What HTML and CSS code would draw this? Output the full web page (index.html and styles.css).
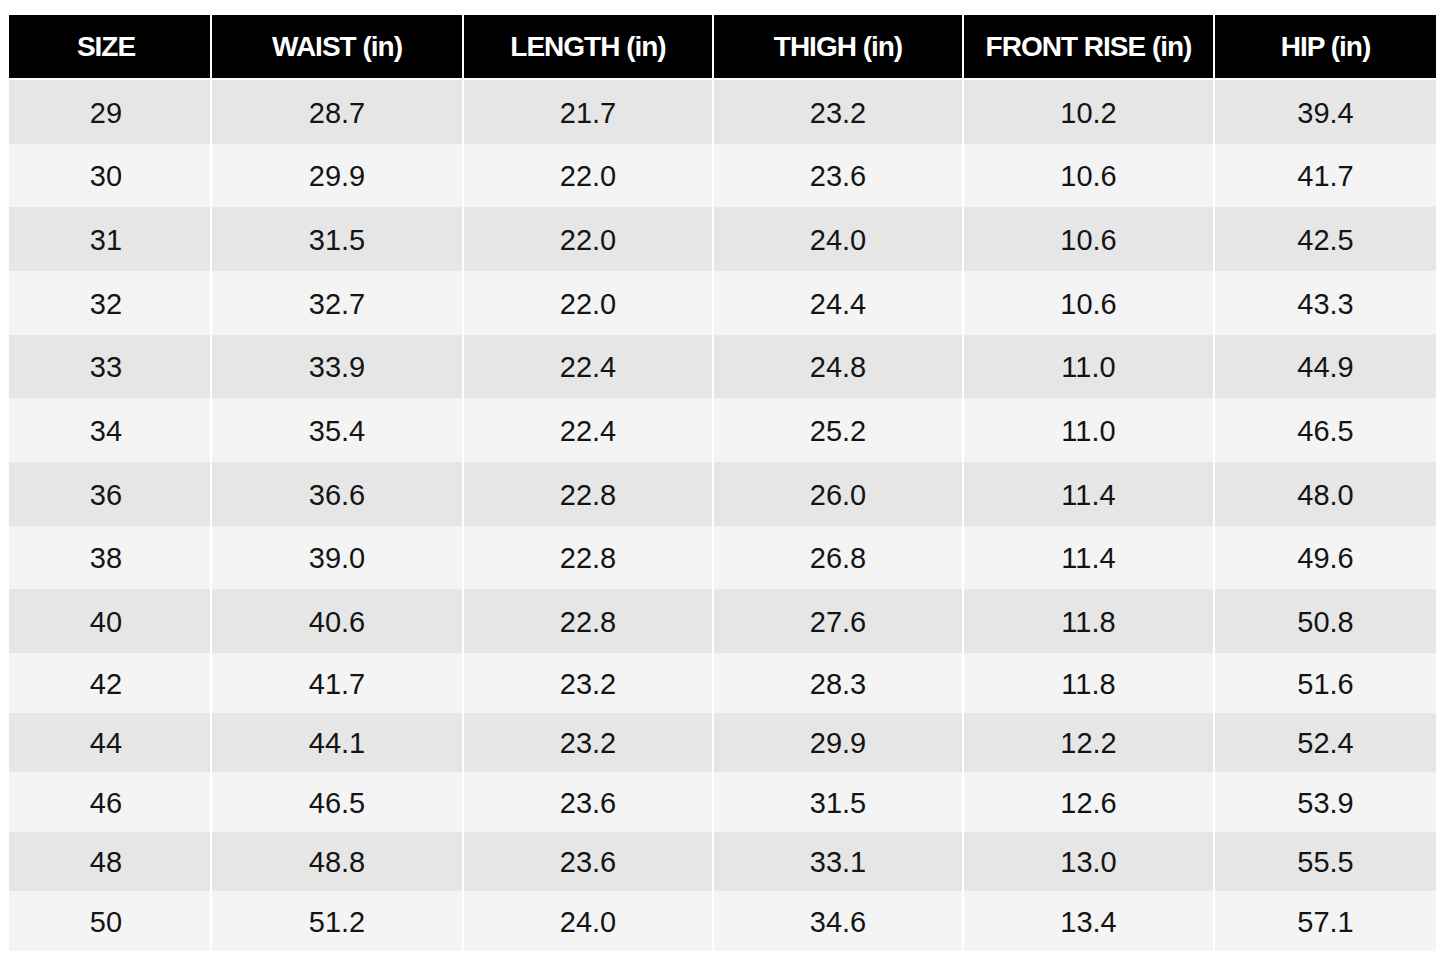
FILE: index.html
```html
<!DOCTYPE html>
<html lang="en">
<head>
<meta charset="utf-8">
<title>Size Chart</title>
<link rel="stylesheet" href="styles.css">
</head>
<body>
<div class="chart">
  <div class="row head">
    <div class="cell first">SIZE</div><div class="cell">WAIST (in)</div><div class="cell">LENGTH (in)</div><div class="cell">THIGH (in)</div><div class="cell">FRONT RISE (in)</div><div class="cell">HIP (in)</div>
  </div>
  <div class="row dark"><div class="cell first">29</div><div class="cell">28.7</div><div class="cell">21.7</div><div class="cell">23.2</div><div class="cell">10.2</div><div class="cell">39.4</div></div>
  <div class="row light"><div class="cell first">30</div><div class="cell">29.9</div><div class="cell">22.0</div><div class="cell">23.6</div><div class="cell">10.6</div><div class="cell">41.7</div></div>
  <div class="row dark"><div class="cell first">31</div><div class="cell">31.5</div><div class="cell">22.0</div><div class="cell">24.0</div><div class="cell">10.6</div><div class="cell">42.5</div></div>
  <div class="row light"><div class="cell first">32</div><div class="cell">32.7</div><div class="cell">22.0</div><div class="cell">24.4</div><div class="cell">10.6</div><div class="cell">43.3</div></div>
  <div class="row dark"><div class="cell first">33</div><div class="cell">33.9</div><div class="cell">22.4</div><div class="cell">24.8</div><div class="cell">11.0</div><div class="cell">44.9</div></div>
  <div class="row light"><div class="cell first">34</div><div class="cell">35.4</div><div class="cell">22.4</div><div class="cell">25.2</div><div class="cell">11.0</div><div class="cell">46.5</div></div>
  <div class="row dark"><div class="cell first">36</div><div class="cell">36.6</div><div class="cell">22.8</div><div class="cell">26.0</div><div class="cell">11.4</div><div class="cell">48.0</div></div>
  <div class="row light"><div class="cell first">38</div><div class="cell">39.0</div><div class="cell">22.8</div><div class="cell">26.8</div><div class="cell">11.4</div><div class="cell">49.6</div></div>
  <div class="row dark"><div class="cell first">40</div><div class="cell">40.6</div><div class="cell">22.8</div><div class="cell">27.6</div><div class="cell">11.8</div><div class="cell">50.8</div></div>
  <div class="row light short"><div class="cell first">42</div><div class="cell">41.7</div><div class="cell">23.2</div><div class="cell">28.3</div><div class="cell">11.8</div><div class="cell">51.6</div></div>
  <div class="row dark short"><div class="cell first">44</div><div class="cell">44.1</div><div class="cell">23.2</div><div class="cell">29.9</div><div class="cell">12.2</div><div class="cell">52.4</div></div>
  <div class="row light short"><div class="cell first">46</div><div class="cell">46.5</div><div class="cell">23.6</div><div class="cell">31.5</div><div class="cell">12.6</div><div class="cell">53.9</div></div>
  <div class="row dark short"><div class="cell first">48</div><div class="cell">48.8</div><div class="cell">23.6</div><div class="cell">33.1</div><div class="cell">13.0</div><div class="cell">55.5</div></div>
  <div class="row light short"><div class="cell first">50</div><div class="cell">51.2</div><div class="cell">24.0</div><div class="cell">34.6</div><div class="cell">13.4</div><div class="cell">57.1</div></div>
</div>
</body>
</html>
```

FILE: styles.css
```css
html, body {
  margin: 0;
  padding: 0;
  background: #ffffff;
}

body {
  font-family: "Liberation Sans", Arial, sans-serif;
}

.chart {
  display: flex;
  flex-direction: column;
  width: max-content;
  margin: 15px 0 0 9px;
  background: #ffffff;
}

.row {
  display: grid;
  grid-template-columns: 201px 250px 248px 248px 249px 221px;
  column-gap: 2px;
  height: 63.67px;
}

.row.short {
  height: 59.6px;
}

.cell {
  display: flex;
  align-items: center;
  justify-content: center;
  font-size: 29px;
  color: #141414;
  padding-top: 3px;
  box-sizing: border-box;
}

.cell.first {
  padding-right: 7px;
}

.row.head {
  height: 63px;
  margin-bottom: 2px;
}

.row.head .cell {
  background: #000000;
  color: #ffffff;
  font-weight: bold;
  font-size: 28px;
  letter-spacing: -1px;
  padding-top: 0;
}

.row.dark .cell {
  background: #e6e6e6;
}

.row.light .cell {
  background: #f4f4f4;
}
```
